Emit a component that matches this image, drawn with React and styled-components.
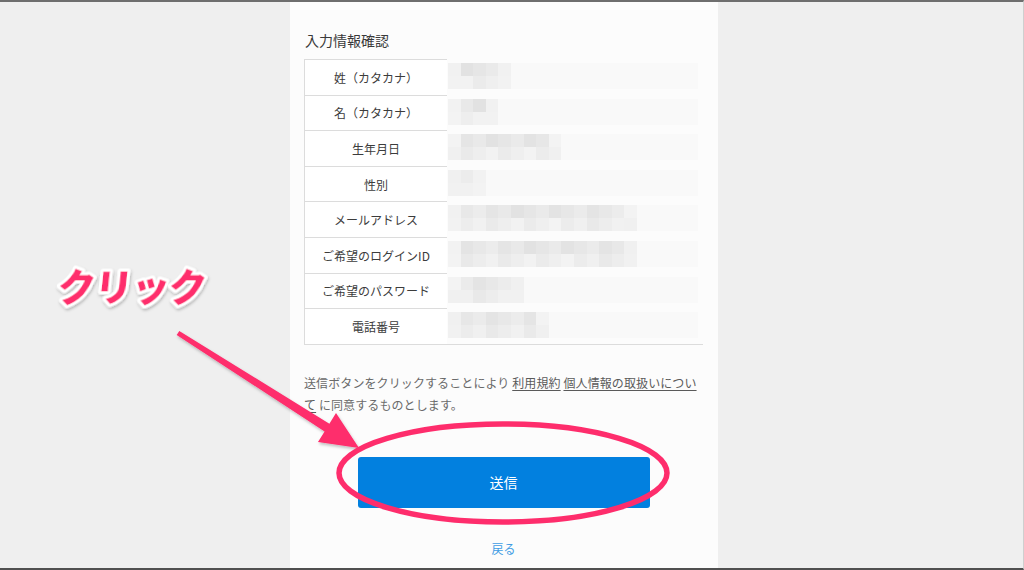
import React from "react";
import styled, { createGlobalStyle } from "styled-components";

const Global = createGlobalStyle`
  html, body { margin: 0; padding: 0; }
  body {
    font-family: "Noto Sans CJK JP", "Noto Sans", sans-serif;
    background: #efefef;
  }
`;

const Screen = styled.div`
  position: relative;
  width: 1024px;
  height: 570px;
  box-sizing: border-box;
  border-top: 2px solid #6e6e6e;
  border-bottom: 2px solid #505050;
  border-right: 1px solid #cfcfcf;
  background: #efefef;
  display: grid;
  grid-template-columns: 290px 428px 1fr;
  overflow: hidden;
`;

const Panel = styled.main`
  grid-column: 2;
  background: #fcfcfc;
  padding: 28px 15px 0 14px;
  display: flex;
  flex-direction: column;
`;

const Title = styled.h2`
  margin: 0 0 9px 1px;
  font-size: 14px;
  line-height: 20px;
  font-weight: 400;
  color: #3a3a3a;
`;

const Table = styled.div`
  display: flex;
  flex-direction: column;
  border-bottom: 1px solid #dcdcdc;
`;

const Row = styled.div`
  display: grid;
  grid-template-columns: 143px 1fr;
  height: 35.6px;
`;

const Label = styled.div`
  box-sizing: border-box;
  border-top: 1px solid #dcdcdc;
  border-left: 1px solid #dcdcdc;
  display: flex;
  align-items: center;
  justify-content: center;
  font-size: 12px;
  color: #3c3c3c;
  background: #fff;
`;

const Value = styled.div`
  padding: 4px 0 0 1px;
  display: flex;
  flex-direction: column;
  filter: blur(0.4px);
`;

const MosaicRow = styled.div`
  display: flex;
  height: 13px;
`;

const Cell = styled.span`
  width: 12.6px;
  height: 100%;
  background: ${(p) => `rgb(${p.$v},${p.$v},${p.$v})`};
`;

const Fade = styled.span`
  flex: 1;
  max-width: ${(p) => p.$w}px;
  height: 100%;
  background: #f9f9f9;
`;

const Note = styled.p`
  margin: 27px 0 0 0;
  font-size: 12px;
  line-height: 22px;
  color: #6a6a6a;
  letter-spacing: 0.1px;
`;

const TermLink = styled.a`
  color: #5a5a5a;
  text-decoration: underline;
  text-underline-offset: 2px;
`;

const SubmitButton = styled.button`
  align-self: center;
  margin-top: 41px;
  width: 292px;
  height: 51px;
  border: none;
  border-radius: 3px;
  background: #0280df;
  color: #fff;
  font-family: inherit;
  font-size: 14px;
  cursor: pointer;
`;

const BackLink = styled.a`
  align-self: center;
  margin-top: 31px;
  font-size: 12px;
  line-height: 20px;
  color: #3f9de4;
  text-decoration: none;
`;

const Overlay = styled.svg`
  position: absolute;
  left: 0;
  top: -2px;
  width: 1024px;
  height: 570px;
  pointer-events: none;
`;

const rows = [
  { label: "姓（カタカナ）", cells: 5, seed: 1 },
  { label: "名（カタカナ）", cells: 4, seed: 2 },
  { label: "生年月日", cells: 9, seed: 3 },
  { label: "性別", cells: 3, seed: 4 },
  { label: "メールアドレス", cells: 15, seed: 5 },
  { label: "ご希望のログインID", cells: 15, seed: 6 },
  { label: "ご希望のパスワード", cells: 6, seed: 7 },
  { label: "電話番号", cells: 8, seed: 8 },
];

function shade(i, j, seed, n) {
  if (i === 0 || i === n - 1) return 240 + ((i + j + seed) % 4);
  const base = j === 0 ? 226 : 233;
  return base + ((i * 37 + j * 53 + seed * 29) % 11);
}

function Mosaic({ cells, seed }) {
  return (
    <>
      {[0, 1].map((j) => (
        <MosaicRow key={j}>
          {Array.from({ length: cells }).map((_, i) => (
            <Cell key={i} $v={shade(i, j, seed, cells)} />
          ))}
          <Fade $w={250 - cells * 12.6} />
        </MosaicRow>
      ))}
    </>
  );
}

export default function App() {
  return (
    <>
      <Global />
      <Screen>
        <Panel>
          <Title>入力情報確認</Title>
          <Table>
            {rows.map((r) => (
              <Row key={r.label}>
                <Label>{r.label}</Label>
                <Value>
                  <Mosaic cells={r.cells} seed={r.seed} />
                </Value>
              </Row>
            ))}
          </Table>
          <Note>
            送信ボタンをクリックすることにより <TermLink>利用規約</TermLink>{" "}
            <TermLink>個人情報の取扱いについて</TermLink> に同意するものとします。
          </Note>
          <SubmitButton>送信</SubmitButton>
          <BackLink>戻る</BackLink>
        </Panel>
        <Overlay viewBox="0 0 1024 570">
          <defs>
            <filter id="sh" x="-20%" y="-20%" width="140%" height="140%">
              <feDropShadow dx="1" dy="2" stdDeviation="1.5" floodColor="#000" floodOpacity="0.25" />
            </filter>
          </defs>
          <text
            x="57"
            y="301"
            fontFamily='"Noto Sans CJK JP", sans-serif'
            fontWeight="900"
            fontSize="38"
            fill="#fe2d6c"
            stroke="#fff"
            strokeWidth="6"
            strokeLinejoin="round"
            paintOrder="stroke"
            filter="url(#sh)"
            letterSpacing="-1"
            transform="skewX(-6) translate(31 0)"
          >
            クリック
          </text>
          <polygon
            points="176.7,335.1 179.3,330.9 329.4,423.8 336,413 359,448 318,442 324.6,431.4"
            fill="#fe2d6c"
            filter="url(#sh)"
          />
          <ellipse cx="503" cy="473" rx="164" ry="49" fill="none" stroke="#fe2d6c" strokeWidth="5.5" />
        </Overlay>
      </Screen>
    </>
  );
}
